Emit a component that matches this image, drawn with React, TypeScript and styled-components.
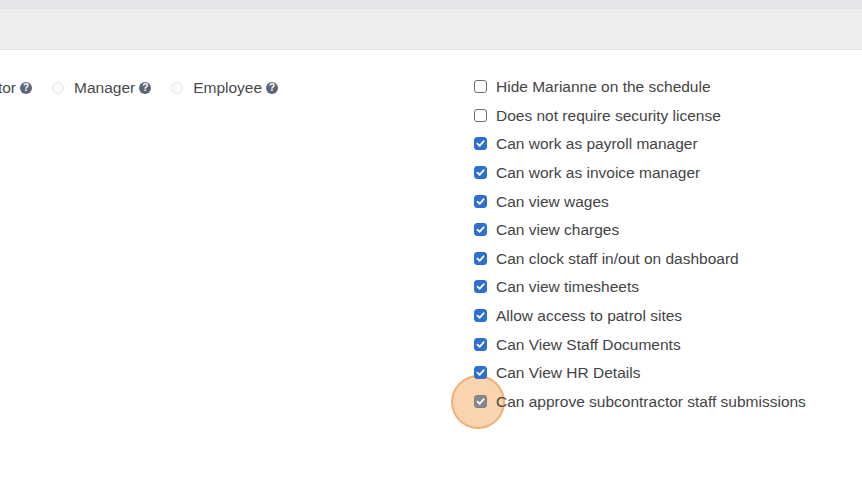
import React from "react";
import styled, { createGlobalStyle } from "styled-components";

const Global = createGlobalStyle`
  html, body { margin: 0; padding: 0; background: #ffffff; }
  body { font-family: "Liberation Sans", Arial, sans-serif; overflow: hidden; }
  #root { width: 862px; height: 482px; }
`;

const Page = styled.div`
  width: 862px;
  height: 482px;
  display: flex;
  flex-direction: column;
  background: #ffffff;
  overflow: hidden;
`;

const TopStrip = styled.div`
  height: 9px;
  background: #e5e5e9;
`;

const Header = styled.div`
  height: 40px;
  background: #eeeeee;
  border-bottom: 1px solid #e4e4e4;
`;

const Body = styled.div`
  display: flex;
  padding-top: 25px;
`;

const LeftCol = styled.div`
  width: 474px;
  display: flex;
  align-items: center;
  height: 24px;
  padding-top: 1px;
`;

const Clip = styled.div`
  width: 16px;
  display: flex;
  justify-content: flex-end;
  white-space: nowrap;
`;

const RadioItem = styled.label<{ $ml: number }>`
  display: flex;
  align-items: center;
  font-size: 15.5px;
  color: #4a4a4a;
  white-space: nowrap;
  margin-left: ${(p) => p.$ml}px;
`;

const Radio = styled.span`
  width: 12px;
  height: 12px;
  border-radius: 50%;
  border: 1px solid #e2e2e2;
  box-sizing: border-box;
  background: #fbfbfb;
  margin-right: 10px;
`;

const Help = styled.span`
  width: 12px;
  height: 12px;
  border-radius: 50%;
  background: #5b6778;
  color: #fff;
  font-size: 10px;
  font-weight: bold;
  display: inline-flex;
  align-items: center;
  justify-content: center;
  margin-left: 4px;
  line-height: 1;
`;

const RightCol = styled.ul`
  list-style: none;
  margin: 0;
  padding: 0;
  display: flex;
  flex-direction: column;
`;

const Row = styled.li`
  height: 28.64px;
  display: flex;
  align-items: flex-start;
  position: relative;
  font-size: 15.5px;
  color: #444444;
  white-space: nowrap;
`;

const Box = styled.span<{ $checked: boolean; $muted?: boolean }>`
  position: relative;
  z-index: 1;
  width: 13px;
  height: 13px;
  box-sizing: border-box;
  border-radius: 3px;
  margin-top: 5px;
  margin-right: 9px;
  display: inline-flex;
  align-items: center;
  justify-content: center;
  border: 1px solid
    ${(p) => (p.$checked ? (p.$muted ? "#7f8084" : "#2f6fcf") : "#6f6f6f")};
  background: ${(p) => (p.$checked ? (p.$muted ? "#86878b" : "#2f6fcf") : "#ffffff")};
`;

const Text = styled.span`
  position: relative;
  z-index: 1;
  line-height: 22px;
  margin-top: 1px;
`;

const Highlight = styled.span`
  position: absolute;
  z-index: 0;
  left: -23px;
  top: -15px;
  width: 54px;
  height: 54px;
  border-radius: 50%;
  box-sizing: border-box;
  background: rgba(245, 168, 95, 0.5);
  border: 2px solid rgba(240, 160, 90, 0.7);
  pointer-events: none;
`;

const Check = () => (
  <svg width="9" height="9" viewBox="0 0 10 10">
    <path d="M1.6 5.2 L4 7.6 L8.6 2.4" fill="none" stroke="#fff" strokeWidth="1.9" strokeLinecap="round" strokeLinejoin="round" />
  </svg>
);

const items: { label: string; checked: boolean }[] = [
  { label: "Hide Marianne on the schedule", checked: false },
  { label: "Does not require security license", checked: false },
  { label: "Can work as payroll manager", checked: true },
  { label: "Can work as invoice manager", checked: true },
  { label: "Can view wages", checked: true },
  { label: "Can view charges", checked: true },
  { label: "Can clock staff in/out on dashboard", checked: true },
  { label: "Can view timesheets", checked: true },
  { label: "Allow access to patrol sites", checked: true },
  { label: "Can View Staff Documents", checked: true },
  { label: "Can View HR Details", checked: true },
  { label: "Can approve subcontractor staff submissions", checked: true },
];

export default function App() {
  return (
    <Page>
      <Global />
      <TopStrip />
      <Header />
      <Body>
        <LeftCol>
          <Clip>
            <RadioItem $ml={0}>Administrator</RadioItem>
          </Clip>
          <Help>?</Help>
          <RadioItem $ml={20}>
            <Radio />
            Manager
          </RadioItem>
          <Help>?</Help>
          <RadioItem $ml={20}>
            <Radio />
            Employee
          </RadioItem>
          <Help>?</Help>
        </LeftCol>
        <RightCol>
          {items.map((it, i) => {
            const last = i === items.length - 1;
            return (
              <Row key={it.label}>
                <Box $checked={it.checked} $muted={last}>
                  {it.checked && <Check />}
                </Box>
                <Text>{it.label}</Text>
                {last && <Highlight />}
              </Row>
            );
          })}
        </RightCol>
      </Body>
    </Page>
  );
}
